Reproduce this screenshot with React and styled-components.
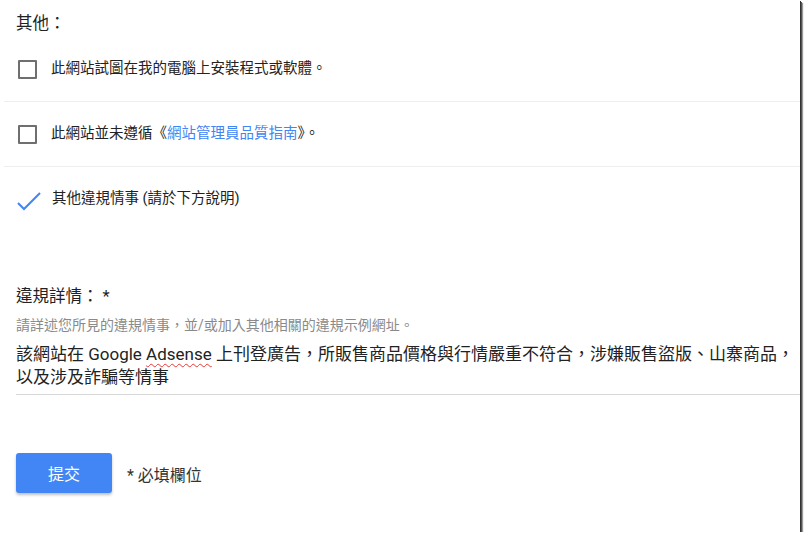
import React from "react";
import styled, { createGlobalStyle } from "styled-components";

const GlobalStyle = createGlobalStyle`
  body {
    margin: 0;
    background: #ffffff;
    font-family: Roboto, "Noto Sans CJK TC", sans-serif;
    color: #222;
  }
`;

const Frame = styled.div`
  width: 800px;
  height: 532px;
  background: #fff;
  box-shadow: 1px 1px 0 #333, 2px 2px 0 #555, 3px 3px 1px #999;
  overflow: hidden;
`;

const Heading = styled.div`
  padding: 14px 16px 0;
  margin-bottom: 3px;
  font-size: 16.5px;
  line-height: 20px;
`;

const Option = styled.div`
  display: flex;
  align-items: center;
  gap: 14px;
  height: 64px;
  margin-left: 4px;
  padding-left: 14px;
  border-bottom: ${(p) => (p.last ? "none" : "1px solid #eeeeee")};
`;

const Box = styled.span`
  width: 15px;
  height: 15px;
  border: 2px solid #6f6f6f;
  border-radius: 1px;
  flex-shrink: 0;
`;

const OptionText = styled.span`
  font-size: 14.5px;
  line-height: 20px;
  color: #222;
`;

const Link = styled.a`
  color: #4285f4;
  text-decoration: none;
`;

const CheckMark = styled.svg`
  flex-shrink: 0;
  margin: 5px -3px 0 -1px;
`;

const Details = styled.div`
  margin-top: 55px;
  padding: 0 0 0 16px;
`;

const Label = styled.div`
  font-size: 16.5px;
  line-height: 22px;
  color: #222;
`;

const Hint = styled.div`
  margin-top: 7px;
  font-size: 14px;
  line-height: 20px;
  color: #8a8a8a;
`;

const Answer = styled.div`
  margin-top: 8px;
  padding-bottom: 5px;
  border-bottom: 1px solid #d8d8d8;
  font-size: 17px;
  line-height: 23px;
  color: #222;
`;

const Misspelled = styled.span`
  text-decoration: underline wavy #e53935;
  text-decoration-thickness: 1px;
  text-underline-offset: 3px;
`;

const Footer = styled.div`
  display: flex;
  align-items: center;
  gap: 15px;
  margin-top: 58px;
  padding-left: 16px;
`;

const Submit = styled.button`
  width: 96px;
  height: 40px;
  border: none;
  border-radius: 3px;
  background: #4285f4;
  color: #fff;
  font-family: Roboto, "Noto Sans CJK TC", sans-serif;
  font-size: 16px;
  box-shadow: 0 2px 3px rgba(0, 0, 0, 0.25);
  cursor: pointer;
`;

const Required = styled.span`
  font-size: 16px;
  color: #333;
  margin-top: 2px;
`;

export default function App() {
  return (
    <>
      <GlobalStyle />
      <Frame>
        <Heading>其他：</Heading>
        <Option>
          <Box />
          <OptionText>此網站試圖在我的電腦上安裝程式或軟體。</OptionText>
        </Option>
        <Option>
          <Box />
          <OptionText>
            此網站並未遵循《<Link>網站管理員品質指南</Link>》。
          </OptionText>
        </Option>
        <Option last>
          <CheckMark width="24" height="20" viewBox="0 0 24 20">
            <polyline points="1,11 7,17 23,1" fill="none" stroke="#4285f4" strokeWidth="2" />
          </CheckMark>
          <OptionText>其他違規情事 (請於下方說明)</OptionText>
        </Option>
        <Details>
          <Label>違規詳情： *</Label>
          <Hint>請詳述您所見的違規情事，並/或加入其他相關的違規示例網址。</Hint>
          <Answer>
            該網站在 Google <Misspelled>Adsense</Misspelled> 上刊登廣告，所販售商品價格與行情嚴重不符合，涉嫌販售盜版、山寨商品，以及涉及詐騙等情事
          </Answer>
        </Details>
        <Footer>
          <Submit>提交</Submit>
          <Required>* 必填欄位</Required>
        </Footer>
      </Frame>
    </>
  );
}
